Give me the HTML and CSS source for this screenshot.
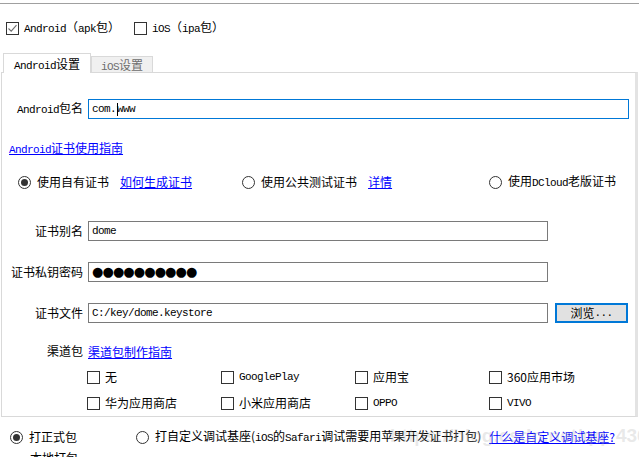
FILE: index.html
```html
<!DOCTYPE html>
<html lang="zh-CN">
<head>
<meta charset="utf-8">
<title>打包</title>
<link rel="stylesheet" href="styles.css">
</head>
<body>
<div class="page">
  <div class="topline"></div>

  <div class="targets">
    <label class="chk-item">
      <span class="box checked"><svg width="11" height="11" viewBox="0 0 11 11"><path d="M1.5 5.5 L4.2 8.2 L9.5 2.2" fill="none" stroke="#6e6e6e" stroke-width="1.1"/></svg></span>
      <span class="simsun"><span class="m">Android</span>（<span class="m">apk</span>包）</span>
    </label>
    <label class="chk-item">
      <span class="box"></span>
      <span class="simsun"><span class="m">iOS</span>（<span class="m">ipa</span>包）</span>
    </label>
  </div>

  <div class="tabs">
    <div class="tab active"><span class="m">Android</span>设置</div>
    <div class="tab"><span class="m">iOS</span>设置</div>
  </div>

  <div class="panel">
    <div class="form-row pkg-row">
      <div class="label"><span class="m">Android</span>包名</div>
      <div class="field focus wide"><span class="m">com.</span><span class="caret"></span><span class="m">www</span></div>
    </div>

    <div class="link-row"><a class="link" href="#"><span class="m">Android</span>证书使用指南</a></div>

    <div class="radio-row">
      <div class="opt opt1"><span class="radio on"></span><span>使用自有证书</span><a class="link yahei" href="#">如何生成证书</a></div>
      <div class="opt opt2"><span class="radio"></span><span>使用公共测试证书</span><a class="link yahei" href="#">详情</a></div>
      <div class="opt opt3"><span class="radio"></span><span>使用<span class="m">DCloud</span>老版证书</span></div>
    </div>

    <div class="form-row alias-row">
      <div class="label">证书别名</div>
      <div class="field narrow"><span class="m">dome</span></div>
    </div>

    <div class="form-row pwd-row">
      <div class="label">证书私钥密码</div>
      <div class="field narrow dots">●●●●●●●●●●</div>
    </div>

    <div class="form-row file-row">
      <div class="label">证书文件</div>
      <div class="field narrow"><span class="m">C:/key/dome.keystore</span></div>
      <div class="btn">浏览<span class="m">...</span></div>
    </div>

    <div class="form-row channel-row">
      <div class="label">渠道包</div>
      <a class="link" href="#">渠道包制作指南</a>
    </div>

    <div class="channels">
      <label class="chk-item"><span class="box"></span><span>无</span></label>
      <label class="chk-item"><span class="box"></span><span class="m">GooglePlay</span></label>
      <label class="chk-item"><span class="box"></span><span>应用宝</span></label>
      <label class="chk-item"><span class="box"></span><span>360应用市场</span></label>
      <label class="chk-item"><span class="box"></span><span>华为应用商店</span></label>
      <label class="chk-item"><span class="box"></span><span>小米应用商店</span></label>
      <label class="chk-item"><span class="box"></span><span class="m">OPPO</span></label>
      <label class="chk-item"><span class="box"></span><span class="m">VIVO</span></label>
    </div>
  </div>

  <div class="bottom-row">
    <div class="opt b1"><span class="radio on"></span><span>打正式包</span></div>
    <div class="opt b2"><span class="radio"></span><span>打自定义调试基座(<span class="m">iOS</span>的<span class="m">Safari</span>调试需要用苹果开发证书打包)</span><a class="link" href="#">什么是自定义调试基座?</a></div>
  </div>
  <div class="cut-row">本地打包</div>

  <div class="watermark">https://blog.csdn.net/qq_43681913</div>
</div>
</body>
</html>
```

FILE: styles.css
```css
* { box-sizing: border-box; }
html, body { margin: 0; padding: 0; background: #fff; }
body {
  font-family: "Noto Sans CJK SC", "Microsoft YaHei", sans-serif;
  font-size: 12px;
  color: #000;
  width: 639px;
  height: 457px;
  overflow: hidden;
}
.page { position: relative; width: 639px; height: 457px; overflow: hidden; }
.m { font-family: "Liberation Mono", "DejaVu Sans Mono", monospace; font-size: 11px; letter-spacing: -0.6px; }
.link { color: #0000ff; text-decoration: underline; text-underline-offset: 1px; }
.topline { height: 4px; border-bottom: 1px solid #a0a0a0; }

.targets {
  display: flex;
  align-items: center;
  height: 16px;
  margin-top: 16px;
  padding-left: 6px;
  gap: 14px;
}
.chk-item { display: flex; align-items: center; height: 16px; line-height: 16px; white-space: nowrap; }
.box {
  width: 13px; height: 13px;
  border: 1px solid #333;
  background: #fff;
  margin-right: 5px;
  display: inline-flex; align-items: center; justify-content: center;
  flex: none;
}
.box svg { display: block; }

.tabs { display: flex; align-items: flex-end; margin-top: 17px; padding-left: 3px; height: 19px; }
.tab {
  height: 16px;
  padding: 0 9px 0 9px;
  border: 1px solid #d9d9d9;
  border-bottom: none;
  background: #f0f0f0;
  color: #6d6d6d;
  line-height: 15px;
  font-size: 12px;
  white-space: nowrap;
}
.tab.active {
  height: 20px;
  background: #fff;
  color: #000;
  padding: 0 10px;
  line-height: 19px;
  margin-bottom: -1px;
  position: relative;
  z-index: 1;
}

.panel {
  margin-left: 1px;
  width: 637px;
  height: 345px;
  border: 1px solid #d9d9d9;
  border-right: 3px solid #e3e3e3;
  padding-bottom: 5px;
}
.form-row { display: flex; align-items: center; }
.label { width: 80px; margin-left: 1px; margin-right: 5px; text-align: right; white-space: nowrap; line-height: 16px; }
.field {
  height: 20px;
  border: 1px solid #7a7a7a;
  line-height: 18px;
  padding-left: 3px;
  white-space: nowrap;
  display: flex; align-items: center;
}
.field.focus { border-color: #0078d7; }
.field.wide { width: 541px; }
.field.narrow { width: 460px; }
.caret { display: inline-block; width: 1px; height: 13px; background: #000; margin-left: 1px; margin-right: -1px; }
.dots { letter-spacing: -0.9px; font-family: "DejaVu Sans", sans-serif; font-size: 13px; }
.pkg-row { margin-top: 26px; }
.link-row { margin-top: 21px; padding-left: 7px; height: 16px; line-height: 16px; }
.radio-row { margin-top: 18px; height: 16px; display: flex; align-items: center; }
.opt { display: flex; align-items: center; height: 16px; line-height: 16px; white-space: nowrap; }
.opt .link { margin-left: 11px; }
.opt1 { margin-left: 16px; }
.opt2 { margin-left: 50px; }
.opt3 { margin-left: 97px; }
.radio {
  width: 13px; height: 13px;
  border-radius: 50%;
  border: 1px solid #333;
  background: #fff;
  margin-right: 6px;
  display: inline-flex; align-items: center; justify-content: center;
  flex: none;
}
.radio.on::after { content: ""; width: 7px; height: 7px; border-radius: 50%; background: #333; }
.alias-row { margin-top: 31px; }
.pwd-row { margin-top: 21px; }
.file-row { margin-top: 21px; }
.btn {
  margin-left: 7px;
  width: 73px; height: 20px;
  border: 2px solid #0078d7;
  background: #e1e1e1;
  display: flex; align-items: center; justify-content: center;
  line-height: 16px;
}
.channel-row { margin-top: 20px; height: 16px; }
.channels {
  margin-top: 10px;
  margin-left: 85px;
  display: grid;
  grid-template-columns: repeat(4, 134px);
  row-gap: 10px;
}

.bottom-row { margin-top: 12px; height: 16px; display: flex; align-items: center; }
.b1 { margin-left: 10px; }
.b2 { margin-left: 59px; }
.b2 .link { margin-left: 8px; }
.cut-row { margin-top: 5px; margin-left: 30px; line-height: 16px; color: #000; }

.watermark {
  position: absolute;
  left: 390px;
  top: 425px;
  font-family: "Liberation Sans", sans-serif;
  font-weight: bold;
  font-size: 19px;
  color: rgba(180, 180, 180, 0.3);
  white-space: nowrap;
  pointer-events: none;
}
```
